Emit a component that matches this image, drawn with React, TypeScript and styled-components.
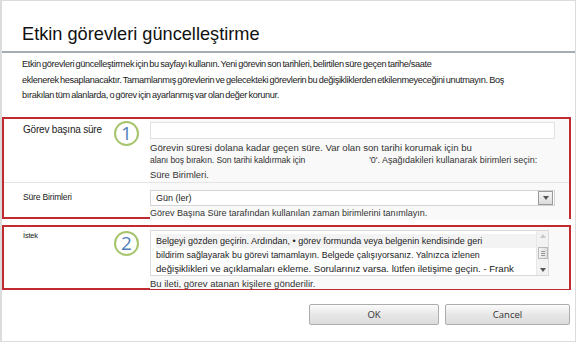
import React from 'react';
import styled, { createGlobalStyle } from 'styled-components';

const GlobalStyle = createGlobalStyle`
    html, body {
        margin: 0;
        padding: 0;
        background: #fff;
    }
    body {
        font-family: "Liberation Sans", Arial, sans-serif;
        color: #333;
    }
`;

// Styled Components
const Dialog = styled.div`
    width: 576px;
    height: 342px;
    box-sizing: border-box;
    border: 1px solid #dcdcdc;
    border-left-width: 2px;
    background: #fff;
    overflow: hidden;
`;

const Header = styled.div`
    padding: 21px 0 0 20px;
    height: 29px;
    border-bottom: 2px solid #a7adb3;
`;

const Title = styled.h1`
    margin: 0;
    font-size: 18.2px;
    font-weight: 400;
    color: #111;
    line-height: 24px;
`;

const Description = styled.div`
    padding: 4px 20px 0;
    height: 60px;
`;

const Line = styled.div`
    white-space: nowrap;
    font-size: 9.2px;
    line-height: 15.5px;
    letter-spacing: -0.35px;
    word-spacing: -0.8px;
    color: #222;
`;

const Box = styled.div<{ $top: number }>`
    margin-top: ${(p) => p.$top}px;
    width: 569px;
    box-sizing: border-box;
    border: 2px solid #c12a30;
`;

const Row = styled.div<{ $height: number; $divider?: boolean }>`
    display: grid;
    grid-template-columns: 100px 46px 1fr;
    height: ${(p) => p.$height}px;
    border-bottom: ${(p) => (p.$divider ? '1px solid #e4e4e4' : 'none')};
`;

const Label = styled.div<{ $size: number; $pad: number }>`
    padding: ${(p) => p.$pad}px 0 0 19px;
    font-size: ${(p) => p.$size}px;
    color: #222;
    letter-spacing: -0.2px;
    white-space: nowrap;
`;

const BadgeCell = styled.div<{ $pad: number }>`
    padding-top: ${(p) => p.$pad}px;
    padding-left: 10px;
`;

const Badge = styled.div`
    width: 21px;
    height: 21px;
    border: 2px solid #a6c46c;
    border-radius: 50%;
    display: flex;
    align-items: center;
    justify-content: center;
    color: #4f7fb8;
    font-size: 19px;
    font-family: "Open Sans", "Liberation Sans", sans-serif;
    line-height: 1;
`;

const Field = styled.div<{ $pad: number }>`
    padding: ${(p) => p.$pad}px 14px 0 0;
    background: #f9f9f9;
`;

const Input = styled.div`
    height: 15px;
    border: 1px solid #e2e2e2;
    background: #fff;
`;

const Help = styled.div`
    padding-top: 2px;
`;

const HelpLine = styled.div<{ $size?: number; $h?: number }>`
    white-space: nowrap;
    font-size: ${(p) => p.$size ?? 9}px;
    line-height: ${(p) => p.$h ?? 13}px;
    color: #333;
`;

const Small = styled.span`
    font-size: 8.6px;
    letter-spacing: -0.1px;
`;

const Gap = styled.span`
    display: inline-block;
    width: 64px;
`;

const Select = styled.div`
    height: 14px;
    border: 1px solid #d4d4d4;
    background: #fff;
    display: flex;
    align-items: center;
    justify-content: space-between;
    padding-left: 5px;
    font-size: 9px;
    color: #222;
`;

const DropButton = styled.div`
    width: 13px;
    height: 12px;
    margin-right: 1px;
    border: 1px solid #9a9a9a;
    background: linear-gradient(#f6f6f6, #dcdcdc);
    display: flex;
    align-items: center;
    justify-content: center;
`;

const TextArea = styled.div`
    position: relative;
    height: 46px;
    margin-right: 6px;
    border: 1px solid #dadada;
    background: #fff;
    padding: 3px 0 0 5px;
    box-sizing: border-box;
`;

const AreaLine = styled.div<{ $size?: number; $bg?: string }>`
    white-space: nowrap;
    font-size: ${(p) => p.$size ?? 9}px;
    line-height: 14px;
    color: #222;
    background: ${(p) => p.$bg ?? 'transparent'};
`;

const Scrollbar = styled.div`
    position: absolute;
    top: 0;
    right: 0;
    width: 12px;
    height: 100%;
    background: #f2f2f2;
    border-left: 1px solid #e8e8e8;
    display: flex;
    flex-direction: column;
    align-items: center;
    justify-content: space-between;
    padding: 3px 0;
    box-sizing: border-box;
`;

const Thumb = styled.div`
    width: 8px;
    height: 10px;
    border: 1px solid #b9b9b9;
    background: linear-gradient(90deg, #f4f4f4, #dedede);
    display: flex;
    flex-direction: column;
    justify-content: center;
    gap: 1px;
    align-items: center;
    span {
        width: 4px;
        height: 1px;
        background: #999;
    }
`;

const Note = styled.div`
    font-size: 9.5px;
    color: #333;
    padding-top: 2px;
    white-space: nowrap;
`;

const Actions = styled.div`
    display: flex;
    justify-content: flex-end;
    gap: 6px;
    padding: 14px 5px 0 0;
`;

const Button = styled.button<{ $width: number }>`
    width: ${(p) => p.$width}px;
    height: 21px;
    border: 1px solid #adadad;
    border-radius: 2px;
    background: linear-gradient(#fafafa, #e6e6e6 55%, #dcdcdc);
    font-family: "Open Sans", "Liberation Sans", sans-serif;
    font-size: 9.5px;
    color: #333;
    padding: 0;
`;

const Arrow = ({ up }: { up?: boolean }) => (
    <svg width="6" height="4" viewBox="0 0 6 4">
        <path d={up ? 'M0 4 L3 0 L6 4 Z' : 'M0 0 L6 0 L3 4 Z'} fill={up ? '#c8c8c8' : '#555'} />
    </svg>
);

const App: React.FC = () => {
    return (
        <>
            <GlobalStyle />
            <Dialog>
                <Header>
                    <Title>Etkin görevleri güncelleştirme</Title>
                </Header>
                <Description>
                    <Line>Etkin görevleri güncelleştirmek için bu sayfayı kullanın. Yeni görevin son tarihleri, belirtilen süre geçen tarihe/saate</Line>
                    <Line>eklenerek hesaplanacaktır. Tamamlanmış görevlerin ve gelecekteki görevlerin bu değişikliklerden etkilenmeyeceğini unutmayın. Boş</Line>
                    <Line>bırakılan tüm alanlarda, o görev için ayarlanmış var olan değer korunur.</Line>
                </Description>

                <Box $top={0}>
                    <Row $height={63} $divider>
                        <Label $size={10} $pad={5}>Görev başına süre</Label>
                        <BadgeCell $pad={2}>
                            <Badge>1</Badge>
                        </BadgeCell>
                        <Field $pad={3}>
                            <Input />
                            <Help>
                                <HelpLine $size={9.6}>Görevin süresi dolana kadar geçen süre. Var olan son tarihi korumak için bu</HelpLine>
                                <HelpLine>
                                    <Small>alanı boş bırakın. Son tarihi kaldırmak için</Small>
                                    <Gap />
                                    '0'. Aşağıdakileri kullanarak birimleri seçin:
                                </HelpLine>
                                <HelpLine $size={9.4} $h={15}>Süre Birimleri.</HelpLine>
                            </Help>
                        </Field>
                    </Row>
                    <Row $height={34}>
                        <Label $size={8.6} $pad={9}>Süre Birimleri</Label>
                        <div />
                        <Field $pad={7}>
                            <Select>
                                Gün (ler)
                                <DropButton>
                                    <Arrow />
                                </DropButton>
                            </Select>
                            <HelpLine $h={14}>Görev Başına Süre tarafından kullanılan zaman birimlerini tanımlayın.</HelpLine>
                        </Field>
                    </Row>
                </Box>

                <Box $top={6}>
                    <Row $height={61}>
                        <Label $size={7.5} $pad={4}>İstek</Label>
                        <BadgeCell $pad={4}>
                            <Badge>2</Badge>
                        </BadgeCell>
                        <Field $pad={3}>
                            <TextArea>
                                <AreaLine $bg="#f3f3f3">Belgeyi gözden geçirin.  Ardından, • görev formunda veya belgenin kendisinde geri</AreaLine>
                                <AreaLine $size={8.9}>bildirim sağlayarak bu görevi tamamlayın. Belgede çalışıyorsanız. Yalnızca izlenen</AreaLine>
                                <AreaLine $size={9.6}>değişiklikleri ve açıklamaları ekleme. Sorularınız varsa. lütfen iletişime geçin. - Frank</AreaLine>
                                <Scrollbar>
                                    <Arrow up />
                                    <Thumb>
                                        <span />
                                        <span />
                                        <span />
                                    </Thumb>
                                    <Arrow />
                                </Scrollbar>
                            </TextArea>
                            <Note>Bu ileti, görev atanan kişilere gönderilir.</Note>
                        </Field>
                    </Row>
                </Box>

                <Actions>
                    <Button $width={130}>OK</Button>
                    <Button $width={125}>Cancel</Button>
                </Actions>
            </Dialog>
        </>
    );
};

export default App;
